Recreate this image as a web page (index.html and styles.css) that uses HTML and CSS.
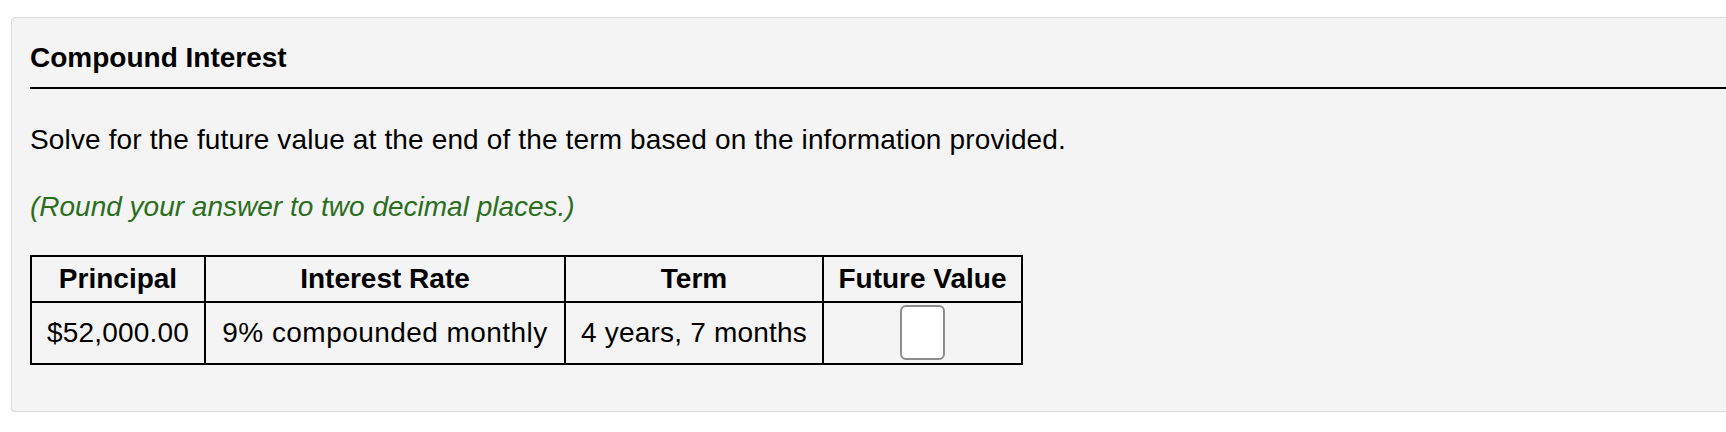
FILE: index.html
```html
<!DOCTYPE html>
<html lang="en">
<head>
<meta charset="utf-8">
<title>Compound Interest</title>
<link rel="stylesheet" href="styles.css">
</head>
<body>
<section class="panel">
  <h2 class="panel-title">Compound Interest</h2>
  <p class="prompt">Solve for the future value at the end of the term based on the information provided.</p>
  <p class="hint">(Round your answer to two decimal places.)</p>
  <table class="grid">
    <thead>
      <tr>
        <th class="c1">Principal</th>
        <th class="c2">Interest Rate</th>
        <th class="c3">Term</th>
        <th class="c4">Future Value</th>
      </tr>
    </thead>
    <tbody>
      <tr>
        <td>$52,000.00</td>
        <td class="rate">9% compounded monthly</td>
        <td>4 years, 7 months</td>
        <td class="answer-cell"><input class="answer" type="text" aria-label="Future Value"></td>
      </tr>
    </tbody>
  </table>
</section>
</body>
</html>
```

FILE: styles.css
```css
html, body {
  margin: 0;
  padding: 0;
  background: #ffffff;
  overflow: hidden;
}

body {
  font-family: "Liberation Sans", Arial, Helvetica, sans-serif;
  font-size: 28px;
  line-height: 32px;
  color: #000;
  padding: 17px 0 0 11px;
}

.panel {
  box-sizing: border-box;
  width: 1800px;
  background: #f4f4f4;
  border: 1px solid #dadada;
  border-radius: 4px;
  box-shadow: 0 1px 1px rgba(0, 0, 0, 0.07);
  padding: 24px 0 46px 18px;
}

.panel-title {
  margin: 0;
  font-size: 28px;
  line-height: 32px;
  font-weight: bold;
  padding-bottom: 13px;
  border-bottom: 2px solid #000;
}

.prompt {
  margin: 35px 0 0;
  color: #000;
  letter-spacing: 0.14px;
}

.hint {
  margin: 35px 0 0;
  font-style: italic;
  color: #2b6e1e;
}

.grid {
  margin-top: 32px;
  border-collapse: collapse;
  border: 2px solid #000;
}

.grid th,
.grid td {
  border: 2px solid #000;
  text-align: center;
  padding: 0;
  white-space: nowrap;
}

.grid th {
  font-weight: bold;
  height: 44px;
  padding: 6px 0;
  box-sizing: border-box;
}

.grid td {
  padding: 2px 0 3px;
  letter-spacing: 0.2px;
}

.grid td.rate {
  letter-spacing: 0.45px;
}

.c1 { width: 174px; }
.c2 { width: 360px; }
.c3 { width: 258px; }
.c4 { width: 199px; }

.answer {
  display: block;
  margin: 0 auto;
  box-sizing: border-box;
  width: 45px;
  height: 55px;
  border: 2px solid #8c8c8c;
  border-radius: 6px;
  background: #fff;
  padding: 0;
  font: inherit;
}
```
